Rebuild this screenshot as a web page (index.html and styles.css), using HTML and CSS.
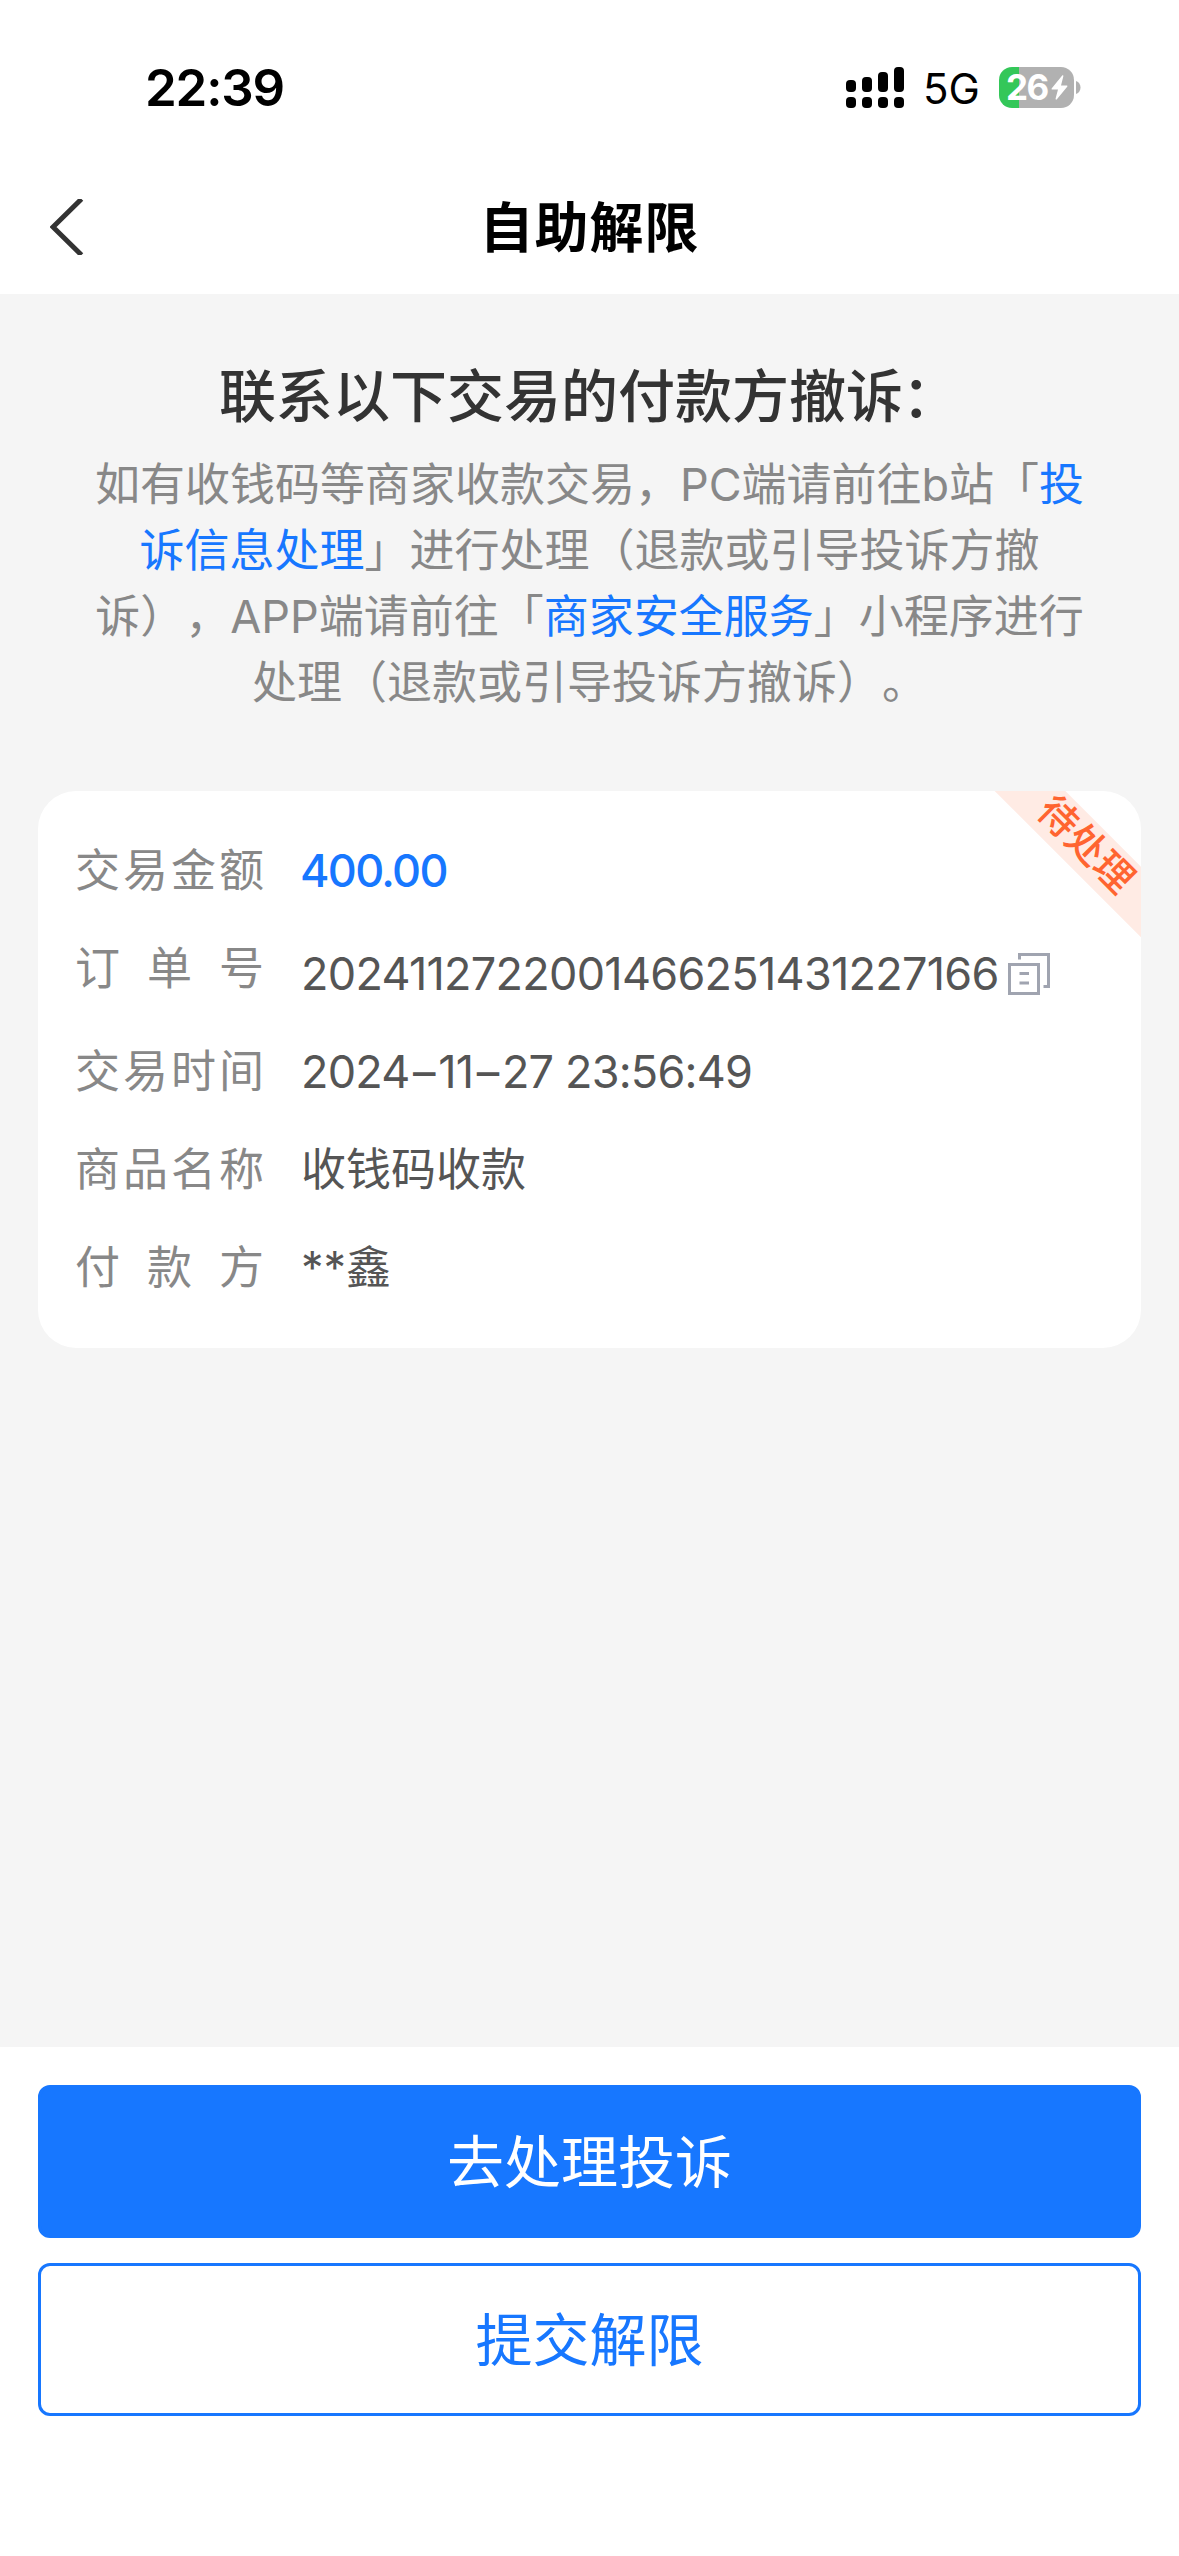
FILE: index.html
```html
<!DOCTYPE html>
<html lang="zh-CN">
<head>
<meta charset="utf-8">
<title>自助解限</title>
<link rel="stylesheet" href="styles.css">
</head>
<body>
<div class="page">
  <header class="top">
    <div class="status">
      <span class="time">22:39</span>
      <div class="status-right">
        <svg class="signal" viewBox="0 0 58 41" width="58" height="41">
          <rect x="0" y="13" width="10" height="12" rx="4"/>
          <rect x="16" y="10" width="10" height="15" rx="4"/>
          <rect x="32" y="5" width="10" height="20" rx="4"/>
          <rect x="48" y="0" width="10" height="25" rx="4"/>
          <rect x="0" y="30" width="10" height="11" rx="4"/>
          <rect x="16" y="30" width="10" height="11" rx="4"/>
          <rect x="32" y="30" width="10" height="11" rx="4"/>
          <rect x="48" y="30" width="10" height="11" rx="4"/>
        </svg>
        <span class="network">5G</span>
        <div class="battery">
          <div class="cell">
            <span class="level">26</span>
            <svg class="bolt" viewBox="0 0 17 25" width="17" height="25"><path d="M11 .8 .8 13.2c-.5.7-.2 1.3.6 1.3h5.6L4.6 23.6c-.2 1.100.6 1.400 1.300.6L16.200 11.700c.5-.7.2-1.300-.6-1.300H10L12.300 1.400C12.600.4 11.700 0 11 .8z"/></svg>
          </div>
          <svg class="nub" viewBox="0 0 5 13" width="5" height="13"><path d="M0 0c6 2 6 11 0 13z"/></svg>
        </div>
      </div>
    </div>
    <div class="nav">
      <svg class="back" viewBox="0 0 34 56" width="34" height="56"><path d="M31.500 0 3 28 31.500 56"/></svg>
      <h1 class="title">自助解限</h1>
      <span class="nav-space"></span>
    </div>
  </header>

  <main class="content">
    <h2 class="heading">联系以下交易的付款方撤诉<span class="colon">：</span></h2>
    <p class="notice">
      <span class="line">如有收钱码等商家收款交易，PC端请前往b站「<a class="link">投</a></span>
      <span class="line"><a class="link">诉信息处理</a>」进行处理（退款或引导投诉方撤</span>
      <span class="line">诉），APP端请前往「<a class="link">商家安全服务</a>」小程序进行</span>
      <span class="line">处理（退款或引导投诉方撤诉）。</span>
    </p>

    <section class="card">
      <div class="ribbon">待处理</div>
      <div class="row"><span class="label"><i>交</i><i>易</i><i>金</i><i>额</i></span><span class="value amount">400.00</span></div>
      <div class="row"><span class="label"><i>订</i><i>单</i><i>号</i></span><span class="value order"><span class="order-no">2024112722001466251431227166</span><svg class="copy" viewBox="0 0 42 42" width="42" height="42"><path d="M11.500 6.500V1.500H40.500V33.500H35.500M1.500 11.500h29v29h-29zM11.500 20.500h9.500M11.500 30h9.500"/></svg></span></div>
      <div class="row"><span class="label"><i>交</i><i>易</i><i>时</i><i>间</i></span><span class="value date">2024<span class="dash">–</span>11<span class="dash">–</span>27 23:56:49</span></div>
      <div class="row"><span class="label"><i>商</i><i>品</i><i>名</i><i>称</i></span><span class="value">收钱码收款</span></div>
      <div class="row"><span class="label"><i>付</i><i>款</i><i>方</i></span><span class="value">**鑫</span></div>
    </section>
  </main>

  <footer class="actions">
    <button class="btn primary">去处理投诉</button>
    <button class="btn outline">提交解限</button>
  </footer>
</div>
</body>
</html>
```
FILE: styles.css
```css
* { box-sizing: border-box; }
body { margin: 0; }
.page {
  width: 1179px;
  height: 2556px;
  display: flex;
  flex-direction: column;
  background: #f5f5f5;
  font-family: Inter, "Noto Sans CJK SC", sans-serif;
  text-spacing-trim: space-all;
  overflow: hidden;
}
.top { height: 294px; background: #fff; flex: none; }
.status {
  height: 160px;
  padding: 15px 98px 0 145px;
  display: flex;
  align-items: center;
  justify-content: space-between;
}
.time { font-size: 51px; font-weight: 600; line-height: 60px; letter-spacing: -1.2px; }
.status-right { display: flex; align-items: center; }
.network { margin: 3px 0 0 19px; width: 76px; font-size: 42px; line-height: 50px; }
.battery { display: flex; align-items: center; gap: 2px; }
.cell {
  width: 75px;
  height: 41px;
  border-radius: 13px;
  background: linear-gradient(to right, #34c759 20px, #b1b1b1 20px);
  display: flex;
  align-items: center;
  padding-left: 7px;
  color: #fff;
}
.level { width: 45px; font-size: 35px; font-weight: 700; line-height: 41px; letter-spacing: -1.5px; }
.bolt { fill: #fff; }
.nub { fill: #b1b1b1; }
.nav {
  height: 134px;
  padding: 0 50px;
  display: flex;
  align-items: center;
  justify-content: space-between;
}
.back { fill: none; stroke: #333; stroke-width: 5; }
.nav-space { width: 34px; }
.title { margin: 0; padding: 3px 0 0; font-size: 54px; font-weight: 700; line-height: 80px; letter-spacing: 1px; color: #000; }

.content { flex: 1; padding: 0 38px; }
.heading {
  margin: 63px 0 0;
  font-size: 57px;
  font-weight: 500;
  line-height: 80px;
  text-align: center;
  color: #333;
}
.colon { margin: 0 1px 0 -1px; }
.notice { margin: 15px 0 0; font-size: 45px; line-height: 66px; color: #888; text-align: center; }
.line { display: block; white-space: nowrap; }
.link { color: #1777ff; }

.card {
  position: relative;
  overflow: hidden;
  height: 557px;
  margin-top: 75px;
  padding: 47px 37px;
  border-radius: 38px;
  background: #fff;
  display: flex;
  flex-direction: column;
  gap: 32px;
}
.row { display: flex; align-items: flex-start; font-size: 45px; line-height: 66px; }
.label { width: 189px; margin-right: 37px; display: flex; justify-content: space-between; color: #888; }
.label i { font-style: normal; }
.value { color: #555; white-space: nowrap; }
.amount { margin-left: -1px; color: #1777ff; font-weight: 500; letter-spacing: -1.7px; }
.order { display: flex; align-items: center; padding-top: 5px; }
.order-no { width: 707px; letter-spacing: -.72px; }
.date { letter-spacing: -.8px; }
.dash { margin: 0 3.5px; }
.copy { fill: none; stroke: #a0a4b0; stroke-width: 3; }
.ribbon {
  position: absolute;
  left: 918px;
  top: 31px;
  width: 260px;
  height: 50px;
  line-height: 45px;
  font-size: 39px;
  font-weight: 500;
  text-align: center;
  text-indent: -3px;
  color: #ff6430;
  background: #ffebe4;
  transform: rotate(45deg);
}

.actions {
  flex: none;
  height: 509px;
  padding: 38px 38px 0;
  background: #fff;
  display: flex;
  flex-direction: column;
  gap: 25px;
}
.btn {
  height: 153px;
  padding: 3px 0 0;
  border: 3px solid #1777ff;
  border-radius: 12px;
  font: 400 57px/80px Inter, "Noto Sans CJK SC", sans-serif;
}
.primary { background: #1777ff; color: #fff; }
.outline { background: #fff; color: #1777ff; }
```
